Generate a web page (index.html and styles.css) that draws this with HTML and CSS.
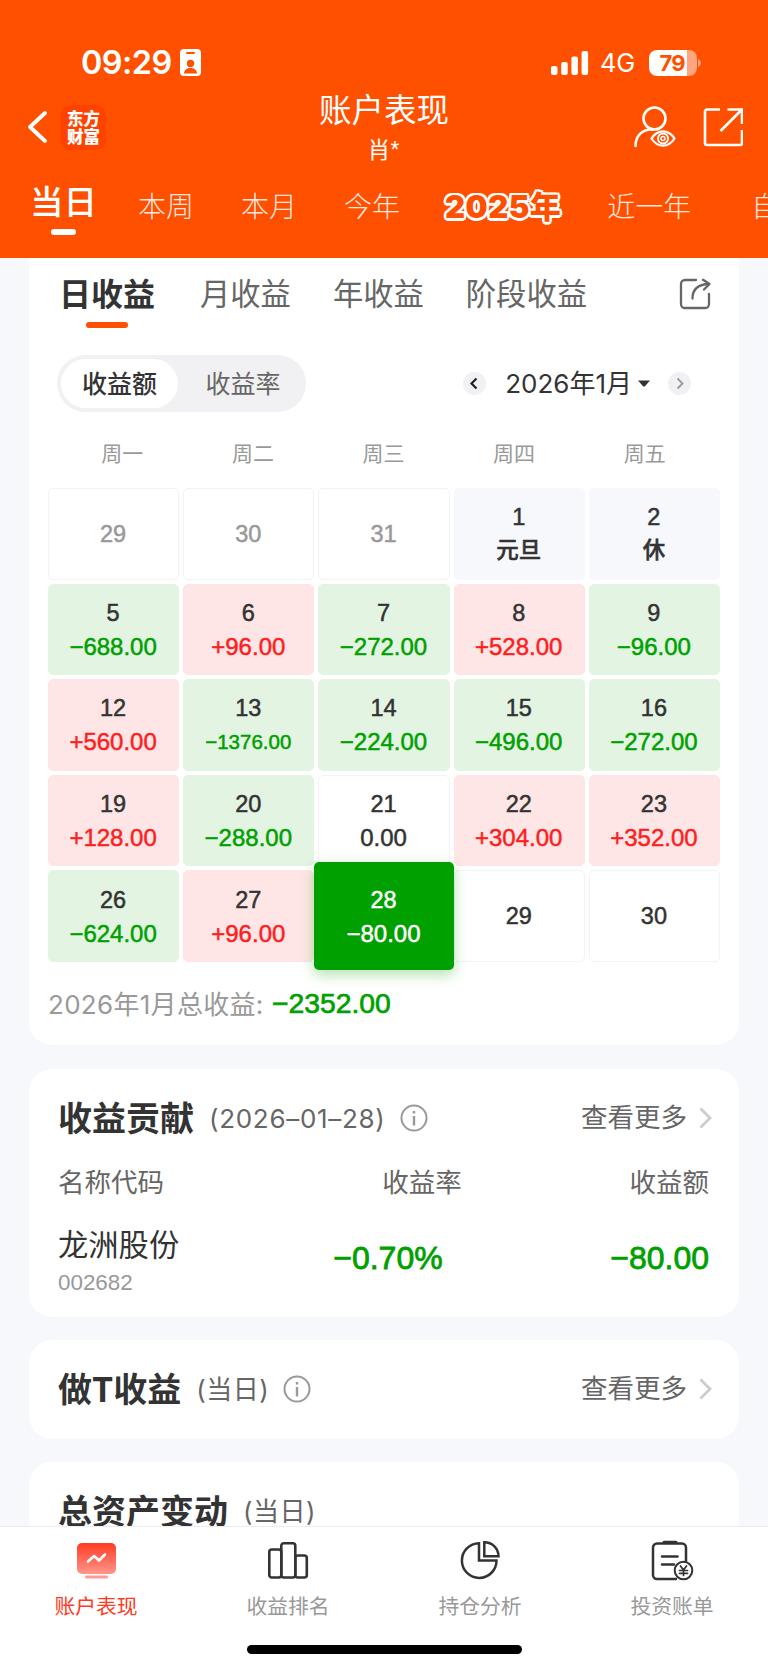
FILE: index.html
```html
<!DOCTYPE html>
<html lang="zh-CN">
<head>
  <meta charset="utf-8">
  <meta name="viewport" content="width=device-width">
  <title>账户表现</title>
  <link rel="stylesheet" href="styles.css">
</head>
<body>
 <div class="page">

  <header class="top">
   <div class="status">
    <span class="clock">09:29</span>
    <svg class="badge" width="21" height="27" viewBox="0 0 21 27"><rect width="21" height="27" rx="4" fill="#fff"/><rect x="6" y="3" width="9" height="2" rx="1" fill="#ff5000"/><circle cx="10.500" cy="14.500" r="3.700" fill="#ff5000"/><path d="M4 24.500c0-3.500 3-5.500 6.500-5.500s6.500 2 6.500 5.500z" fill="#ff5000"/></svg>
    <svg class="signal" width="38" height="24" viewBox="0 0 38 24" fill="#fff"><rect y="15" width="6.500" height="9" rx="2"/><rect x="10.200" y="11" width="6.500" height="13" rx="2"/><rect x="20.400" y="5.500" width="6.500" height="18.500" rx="2"/><rect x="30.600" width="6.500" height="24" rx="2"/></svg>
    <span class="net">4G</span>
    <div class="battery"><span>79</span></div>
    <svg class="cap" width="3" height="8" viewBox="0 0 3 8"><path d="M0 0c4 1.500 4 6.500 0 8z" fill="#ffa580"/></svg>
   </div>

   <div class="nav">
    <div class="nav-left">
     <svg width="21" height="34" viewBox="0 0 21 34" fill="none" stroke="#fff" stroke-width="3.800" stroke-linecap="round" stroke-linejoin="round"><path d="M18 3 3 17l15 14"/></svg>
     <div class="logo">东方<br>财富</div>
    </div>
    <div class="nav-title">
     <h1>账户表现</h1>
     <p>肖*</p>
    </div>
    <div class="nav-right">
     <svg width="42" height="42" viewBox="0 0 42 42" fill="none" stroke="#fff" stroke-width="2.600" stroke-linecap="round"><circle cx="20.500" cy="12.500" r="11"/><path d="M1.500 40c0-10 6.500-17 17-16.500"/><path d="M17.500 32.500c6-9.500 17-9.500 23 0-6 9.500-17 9.500-23 0z" stroke-width="2.200"/><circle cx="29" cy="32.500" r="5" stroke-width="2"/><circle cx="29" cy="32.500" r="2" stroke-width="1.400"/></svg>
     <svg width="40" height="40" viewBox="0 0 40 40" fill="none" stroke="#fff" stroke-width="2.600"><path d="M17 2.500H4a2 2 0 0 0-2 2V36a2 2 0 0 0 2 2h33a2 2 0 0 0 2-2V23"/><path d="M24.500 2.500H39V17M39 2.500 17.500 24"/></svg>
    </div>
   </div>

   <nav class="range">
    <span class="on">当日</span>
    <span>本周</span>
    <span>本月</span>
    <span>今年</span>
    <span class="year">2025年</span>
    <span>近一年</span>
    <span class="last">自定义</span>
   </nav>
  </header>

  <main>
   <section class="card calendar">
    <div class="tabs">
     <span class="on">日收益</span>
     <span>月收益</span>
     <span>年收益</span>
     <span>阶段收益</span>
     <svg width="32" height="32" viewBox="0 0 32 32" fill="none" stroke="#666" stroke-width="2.300" stroke-linecap="round" stroke-linejoin="round"><path d="M17 2H6a4 4 0 0 0-4 4v20a4 4 0 0 0 4 4h20a4 4 0 0 0 4-4V16"/><path d="M13.500 20.500C13.500 12 18 6.300 30 6M24 1.800l6.500 4.200-5.500 5.500"/></svg>
    </div>

    <div class="tools">
     <div class="toggle"><span class="on">收益额</span><span>收益率</span></div>
     <div class="month">
      <svg width="23" height="23" viewBox="0 0 23 23" fill="none"><circle cx="11.500" cy="11.500" r="11.500" fill="#f1f1f4"/><path d="M13.500 6.500 8.500 11.500l5 5" stroke="#222" stroke-width="2.200"/></svg>
      <span>2026年1月</span>
      <svg class="caret" width="12" height="7" viewBox="0 0 12 7"><path d="M0 .5h12L7.200 6q-1.200 1-2.400 0z" fill="#333"/></svg>
      <svg width="23" height="23" viewBox="0 0 23 23" fill="none"><circle cx="11.500" cy="11.500" r="11.500" fill="#f1f1f4"/><path d="m9.500 6.500 5 5-5 5" stroke="#999" stroke-width="1.800"/></svg>
     </div>
    </div>

    <div class="week"><span>周一</span><span>周二</span><span>周三</span><span>周四</span><span>周五</span></div>

    <div class="days">
     <div class="day out">29</div>
     <div class="day out">30</div>
     <div class="day out">31</div>
     <div class="day rest">1<b>元旦</b></div>
     <div class="day rest">2<b>休</b></div>

     <div class="day down">5<b>−688.00</b></div>
     <div class="day up">6<b>+96.00</b></div>
     <div class="day down">7<b>−272.00</b></div>
     <div class="day up">8<b>+528.00</b></div>
     <div class="day down">9<b>−96.00</b></div>

     <div class="day up">12<b>+560.00</b></div>
     <div class="day down">13<b class="long">−1376.00</b></div>
     <div class="day down">14<b>−224.00</b></div>
     <div class="day down">15<b>−496.00</b></div>
     <div class="day down">16<b>−272.00</b></div>

     <div class="day up">19<b>+128.00</b></div>
     <div class="day down">20<b>−288.00</b></div>
     <div class="day">21<b>0.00</b></div>
     <div class="day up">22<b>+304.00</b></div>
     <div class="day up">23<b>+352.00</b></div>

     <div class="day down">26<b>−624.00</b></div>
     <div class="day up">27<b>+96.00</b></div>
     <div class="day now">28<b>−80.00</b></div>
     <div class="day">29</div>
     <div class="day">30</div>
    </div>

    <p class="total"><span>2026年1月总收益:</span> <b>−2352.00</b></p>
   </section>

   <section class="card contrib">
    <div class="head">
     <h2>收益贡献</h2>
     <span class="sub">(2026–01–28)</span>
     <svg class="info" width="28" height="28" viewBox="0 0 28 28" fill="none" stroke="#999" stroke-width="2"><circle cx="14" cy="14" r="12.500"/><path d="M14 12v9.500M14 7v2.400" stroke-width="2.400"/></svg>
     <a class="more">查看更多<svg width="13" height="22" viewBox="0 0 13 22" fill="none" stroke="#ccc" stroke-width="2.800"><path d="m1.500 1.500 9.500 9.500-9.500 9.500"/></svg></a>
    </div>
    <div class="row labels"><span>名称代码</span><span>收益率</span><span>收益额</span></div>
    <div class="row stock">
     <div><p class="name">龙洲股份</p><p class="code">002682</p></div>
     <b>−0.70%</b>
     <b>−80.00</b>
    </div>
   </section>

   <section class="card">
    <div class="head">
     <h2>做T收益</h2>
     <span class="sub cn">(当日)</span>
     <svg class="info" width="28" height="28" viewBox="0 0 28 28" fill="none" stroke="#999" stroke-width="2"><circle cx="14" cy="14" r="12.500"/><path d="M14 12v9.500M14 7v2.400" stroke-width="2.400"/></svg>
     <a class="more">查看更多<svg width="13" height="22" viewBox="0 0 13 22" fill="none" stroke="#ccc" stroke-width="2.800"><path d="m1.500 1.500 9.500 9.500-9.500 9.500"/></svg></a>
    </div>
   </section>

   <section class="card">
    <div class="head">
     <h2>总资产变动</h2>
     <span class="sub cn">(当日)</span>
    </div>
   </section>
  </main>

  <footer class="bottom">
   <div class="menu">
    <div class="item on">
     <svg width="44" height="42" viewBox="0 0 44 42" fill="none"><defs><linearGradient id="red" x1="0" y1="0" x2="0" y2="1"><stop offset="0" stop-color="#ff3b24"/><stop offset="1" stop-color="#ff968a"/></linearGradient></defs><rect x="3" y="3" width="39" height="31" rx="5" fill="url(#red)"/><path d="m14 21.500 6-5.500 5 4.500 6-6" stroke="#fff" stroke-width="2.600" stroke-linecap="round" stroke-linejoin="round"/><rect x="11" y="35.500" width="23" height="3" rx="1.500" fill="#ff9a8f"/></svg>
     <span>账户表现</span>
    </div>
    <div class="item">
     <svg width="44" height="42" viewBox="0 0 44 42" fill="none" stroke="#333" stroke-width="2.600"><rect x="3.300" y="9.500" width="12" height="28" rx="2.500"/><rect x="15.300" y="3.300" width="14" height="34.200" rx="2.500"/><rect x="29.300" y="15.500" width="11.500" height="22" rx="2.500"/></svg>
     <span>收益排名</span>
    </div>
    <div class="item">
     <svg width="44" height="42" viewBox="0 0 44 42" fill="none" stroke="#333" stroke-width="2.500"><path d="M21 3.300A17.300 17.300 0 1 0 38.500 20.500H21z"/><path d="M26.300 2.300V16.200H40.500C40.500 8.500 34.300 2.300 26.300 2.300z"/></svg>
     <span>持仓分析</span>
    </div>
    <div class="item">
     <svg width="44" height="42" viewBox="0 0 44 42" fill="none" stroke="#333" stroke-width="2.500" stroke-linecap="round"><path d="M26 39H7a4 4 0 0 1-4-4V7.500a4 4 0 0 1 4-4h25a4 4 0 0 1 4 4V21"/><path d="M14 2.300h12" stroke-width="3"/><path d="M12 16.500h15.500M12 24.500h12"/><circle cx="33.500" cy="30.500" r="8.800" fill="#fff" stroke-width="2"/><path d="m30.500 26 3 4 3-4M33.500 30v5.500M29.500 30.500h8M29.500 33.300h8" stroke-width="1.700"/></svg>
     <span>投资账单</span>
    </div>
   </div>
   <div class="home"></div>
  </footer>
 </div>
</body>
</html>
```
FILE: styles.css
```css
*,*:before,*:after {box-sizing:border-box;}
body,h1,h2,p{
 margin:0;
 padding:0;
}
body{
 background:#f7f8fb;
 color:#333;
 font-family:"Liberation Sans","Noto Sans CJK SC",sans-serif;
}
svg{
 display:block;
 flex:none;
}
b{font-weight:400;}
.page{
 width:768px;
 height:1670px;
 display:flex;
 flex-direction:column;
 overflow:hidden;
}

/* orange header */
.top{
 flex:none;
 height:258px;
 background:#ff5000;
 color:#fff;
 padding-top:42px;
}
.status{
 display:flex;
 align-items:center;
 height:41px;
 padding-left:81px;
 font-family:Inter,sans-serif;
}
.clock{
 width:99px;
 font-size:32.500px;
 font-weight:600;
 letter-spacing:-0.6px;
}
.signal{margin-left:350px;}
.net{
 width:60px;
 padding-left:11px;
 font-size:25.500px;
 letter-spacing:-0.3px;
}
.battery{
 width:48px;
 height:26px;
 border-radius:8px;
 background:linear-gradient(90deg,#fff 38px,#ffa580 38px);
 color:#ff5000;
 font-size:22px;
 font-weight:700;
 line-height:26px;
 padding-right:2px;
 text-align:center;
 letter-spacing:-1px;
}
.cap{margin-left:1px;}
.nav{
 display:grid;
 grid-template-columns:1fr auto 1fr;
 height:88px;
 padding:0 25px 0 27px;
}
.nav-left{
 display:flex;
 align-items:center;
 gap:13px;
}
.logo{
 width:45px;
 height:45px;
 border-radius:10px;
 background:#ff4200;
 padding:4px 0;
 font:900 16.500px/18.500px "Noto Sans CJK SC",sans-serif;
 text-align:center;
}
.nav-title{
 margin-left:-2px;
 text-align:center;
}
.nav-title h1{
 margin-top:6px;
 font-size:32.500px;
 font-weight:400;
 line-height:44px;
}
.nav-title p{
 margin-left:-1px;
 font-size:23px;
 line-height:34px;
}
.nav-right{
 display:flex;
 justify-content:flex-end;
 align-items:center;
 gap:27px;
}
.range{
 display:flex;
 align-items:center;
 height:74px;
 padding-left:30px;
 white-space:nowrap;
 overflow:hidden;
 color:rgba(255,255,255,.88);
 font-size:28px;
 line-height:40px;
 font-weight:300;
}
.range span{
 flex:none;
 margin-right:47px;
}
.range .on{
 position:relative;
 margin:-10px 41px 0 0;
 color:#fff;
 font-size:33.500px;
 font-weight:500;
}
.range .on:after{
 content:"";
 position:absolute;
 left:21px;
 bottom:-12px;
 width:25px;
 height:6px;
 border-radius:3px;
 background:#fff;
}
.range .year{
 margin:-3px 46px 0 -2px;
 color:#ff5000;
 font-family:Inter,"Noto Sans CJK SC",sans-serif;
 font-size:31px;
 font-weight:900;
 letter-spacing:0.500px;
 text-shadow:2.500px 0 #fff,-2.500px 0 #fff,0 2.500px #fff,0 -2.500px #fff,1.800px 1.800px #fff,-1.800px 1.800px #fff,1.800px -1.800px #fff,-1.800px -1.800px #fff;
}
.range .last{margin-left:13px;}

/* cards */
main{
 flex:1;
 min-height:0;
 overflow:hidden;
 padding:0 29px;
}
.card{
 height:99px;
 margin-bottom:23px;
 padding:0 29px;
 border-radius:23px;
 background:#fff;
}
.calendar{
 height:787px;
 margin-bottom:24px;
 padding:0 19px;
 border-radius:0 0 23px 23px;
}
.tabs{
 display:flex;
 align-items:center;
 height:72px;
 padding:0 9px 0 11px;
 color:#666;
 font-size:30.300px;
 line-height:44px;
}
.tabs span{
 margin-top:1px;
 margin-right:42px;
}
.tabs .on{
 position:relative;
 margin-right:45px;
 color:#333;
 font-size:32px;
 font-weight:700;
}
.tabs .on:after{
 content:"";
 position:absolute;
 left:27px;
 bottom:-11px;
 width:42px;
 height:6px;
 border-radius:3px;
 background:#ff5000;
}
.tabs svg{margin-left:auto;}
.tools{
 display:flex;
 justify-content:space-between;
 align-items:center;
 height:57px;
 margin-top:25px;
 padding:0 29px 0 9px;
}
.toggle{
 display:flex;
 width:249px;
 height:57px;
 padding:4px;
 border-radius:29px;
 background:#f1f1f4;
 color:#666;
 font-size:25px;
 line-height:50px;
 text-align:center;
}
.toggle span{
 flex:1;
 padding-left:6px;
}
.toggle .on{
 flex:0 0 117px;
 height:49px;
 padding:0;
 border-radius:25px;
 background:#fff;
 color:#333;
 font-weight:500;
}
.month{
 display:flex;
 align-items:center;
 font:26px/38px Inter,"Noto Sans CJK SC",sans-serif;
}
.month span{
 margin-left:19px;
 letter-spacing:0;
}
.caret{margin:0 18px 0 6px;}
.week{
 display:flex;
 height:76px;
 margin:0 10px 0 9px;
 color:#999;
 font-size:21px;
 line-height:83px;
 text-align:center;
}
.week span{flex:1;}
.days{
 display:grid;
 grid-template-columns:repeat(5,1fr);
 grid-auto-rows:91.600px;
 gap:4px;
}
.day{
 display:flex;
 flex-direction:column;
 align-items:center;
 justify-content:center;
 padding:1px 1px 0 0;
 border:1px solid #f3f3f5;
 border-radius:5px;
 font-size:23.500px;
 line-height:33px;
 -webkit-text-stroke:0.500px;
}
.day b{font-size:24px;}
.day .long{font-size:20.500px;}
.out{color:#999;}
.rest{
 border-color:#f7f8fb;
 background:#f7f8fb;
}
.rest b{
 font-size:22.500px;
 font-weight:500;
}
.down{
 border-color:#e3f4e3;
 background:#e3f4e3;
}
.down b{color:#00a000;}
.up{
 border-color:#ffe6e6;
 background:#ffe6e6;
}
.up b{color:#fc1f1f;}
.now{
 z-index:1;
 margin:-8px -4px;
 border:0;
 background:#00a000;
 box-shadow:0 5px 14px rgba(0,160,0,.3);
 color:#fff;
}
.total{
 display:flex;
 align-items:center;
 height:84px;
 color:#999;
 font-family:Inter,"Noto Sans CJK SC",sans-serif;
 font-size:26px;
}
.total span{
 width:224px;
 margin-top:-2px;
 letter-spacing:0.300px;
 white-space:nowrap;
}
.total b{
 color:#00a000;
 font-family:"Liberation Sans",sans-serif;
 font-size:28.300px;
 -webkit-text-stroke:0.700px;
}
.head{
 display:flex;
 align-items:center;
 height:98px;
}
h2{
 margin-top:-2px;
 font:700 34px/50px "Noto Sans CJK SC",sans-serif;
}
.sub{
 margin-left:15px;
 color:#666;
 font-family:Inter,"Noto Sans CJK SC",sans-serif;
 font-size:26px;
 letter-spacing:0.700px;
}
.cn{
 margin-top:-3px;
 letter-spacing:0.500px;
}
.info{margin-left:14px;}
.more{
 display:flex;
 align-items:center;
 gap:12px;
 margin-left:auto;
 margin-right:-2px;
 color:#666;
 font-size:26.500px;
 line-height:35px;
}
.contrib{height:248px;}
.row{
 display:grid;
 grid-template-columns:1fr 1fr 1fr;
}
.labels{
 color:#666;
 font-size:26.500px;
 line-height:34px;
 margin-top:-1px;
}
.row > :nth-child(2){
 justify-self:end;
 margin-right:31px;
}
.row > :last-child{
 justify-self:end;
 margin-right:1px;
}
.stock{
 align-items:center;
 margin-top:22px;
}
.stock b{
 color:#00a000;
 font-size:32px;
 -webkit-text-stroke:0.800px;
}
.stock > :nth-child(2){margin-right:50px;}
.name{
 font-size:30.300px;
 line-height:48px;
}
.code{
 color:#999;
 font-size:22.400px;
 line-height:25px;
}

/* bottom menu */
.bottom{
 flex:none;
 height:144px;
 border-top:1px solid #ededf0;
 background:#fff;
}
.menu{
 display:flex;
 height:118px;
 padding-top:13px;
}
.item{
 flex:1;
 display:flex;
 flex-direction:column;
 align-items:center;
 color:#999;
 font-size:20.800px;
 line-height:30px;
}
.item span{margin-top:10px;}
.item.on{color:#ff3b24;}
.home{
 width:275px;
 height:9px;
 margin:0 auto;
 border-radius:5px;
 background:#000;
}
```
